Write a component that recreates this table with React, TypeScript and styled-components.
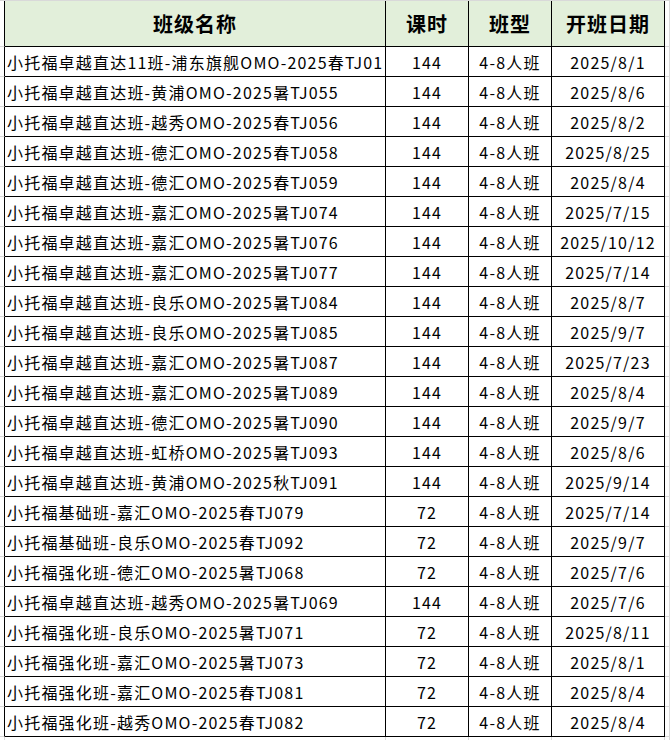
import React from 'react';
import styled, { createGlobalStyle } from 'styled-components';

const GlobalStyle = createGlobalStyle`
  html, body {
    margin: 0;
    padding: 0;
    background: #ffffff;
  }
  body {
    font-family: "Noto Sans CJK SC", "Noto Sans", sans-serif;
    color: #000;
  }
`;

// Grille de la feuille (colonnes Excel)
const Sheet = styled.div`
  display: grid;
  grid-template-columns: 5px 381px 83px 83px 113px 5px;
  grid-template-rows: 46px;
  grid-auto-rows: 30px;
  width: 670px;
  height: 740px;
  overflow: hidden;
  border-top: 1px solid #d9d9d9;
  box-sizing: border-box;
`;

const Cell = styled.div<{ $head?: boolean; $align?: 'left' | 'center' }>`
  box-sizing: border-box;
  border-right: 1px solid #000;
  border-bottom: 1px solid #000;
  background: ${(p) => (p.$head ? '#e2efda' : '#fff')};
  display: flex;
  align-items: center;
  justify-content: ${(p) => (p.$align === 'left' ? 'flex-start' : 'center')};
  padding: ${(p) => (p.$align === 'left' ? '0 0 0 2px' : '0')};
  font-size: ${(p) => (p.$head ? '20px' : '16px')};
  font-weight: ${(p) => (p.$head ? 700 : 400)};
  white-space: nowrap;
  overflow: hidden;
  letter-spacing: ${(p) => (p.$head ? '1px' : '1.2px')};
`;

// Bordure gauche du tableau
const Edge = styled.div`
  box-sizing: border-box;
  border-right: 1px solid #000;
  border-bottom: 1px solid #d9d9d9;
`;

// Quadrillage gris hors tableau
const Grid = styled.div`
  box-sizing: border-box;
  border-right: 1px solid #d9d9d9;
  border-bottom: 1px solid #d9d9d9;
`;

type Row = [string, number, string];

const rows: Row[] = [
  ['小托福卓越直达11班-浦东旗舰OMO-2025春TJ01', 144, '2025/8/1'],
  ['小托福卓越直达班-黄浦OMO-2025暑TJ055', 144, '2025/8/6'],
  ['小托福卓越直达班-越秀OMO-2025春TJ056', 144, '2025/8/2'],
  ['小托福卓越直达班-德汇OMO-2025春TJ058', 144, '2025/8/25'],
  ['小托福卓越直达班-德汇OMO-2025春TJ059', 144, '2025/8/4'],
  ['小托福卓越直达班-嘉汇OMO-2025暑TJ074', 144, '2025/7/15'],
  ['小托福卓越直达班-嘉汇OMO-2025暑TJ076', 144, '2025/10/12'],
  ['小托福卓越直达班-嘉汇OMO-2025暑TJ077', 144, '2025/7/14'],
  ['小托福卓越直达班-良乐OMO-2025暑TJ084', 144, '2025/8/7'],
  ['小托福卓越直达班-良乐OMO-2025暑TJ085', 144, '2025/9/7'],
  ['小托福卓越直达班-嘉汇OMO-2025暑TJ087', 144, '2025/7/23'],
  ['小托福卓越直达班-嘉汇OMO-2025暑TJ089', 144, '2025/8/4'],
  ['小托福卓越直达班-德汇OMO-2025暑TJ090', 144, '2025/9/7'],
  ['小托福卓越直达班-虹桥OMO-2025暑TJ093', 144, '2025/8/6'],
  ['小托福卓越直达班-黄浦OMO-2025秋TJ091', 144, '2025/9/14'],
  ['小托福基础班-嘉汇OMO-2025春TJ079', 72, '2025/7/14'],
  ['小托福基础班-良乐OMO-2025春TJ092', 72, '2025/9/7'],
  ['小托福强化班-德汇OMO-2025暑TJ068', 72, '2025/7/6'],
  ['小托福卓越直达班-越秀OMO-2025暑TJ069', 144, '2025/7/6'],
  ['小托福强化班-良乐OMO-2025暑TJ071', 72, '2025/8/11'],
  ['小托福强化班-嘉汇OMO-2025暑TJ073', 72, '2025/8/1'],
  ['小托福强化班-嘉汇OMO-2025春TJ081', 72, '2025/8/4'],
  ['小托福强化班-越秀OMO-2025春TJ082', 72, '2025/8/4'],
];

export default function App() {
  return (
    <>
      <GlobalStyle />
      <Sheet>
        <Edge />
        <Cell $head>班级名称</Cell>
        <Cell $head>课时</Cell>
        <Cell $head>班型</Cell>
        <Cell $head>开班日期</Cell>
        <Grid />
        {rows.map(([name, hours, date], i) => (
          <React.Fragment key={i}>
            <Edge />
            <Cell $align="left">{name}</Cell>
            <Cell>{hours}</Cell>
            <Cell>4-8人班</Cell>
            <Cell>{date}</Cell>
            <Grid />
          </React.Fragment>
        ))}
        {Array.from({ length: 6 }).map((_, i) => (
          <Grid key={i} />
        ))}
      </Sheet>
    </>
  );
}
